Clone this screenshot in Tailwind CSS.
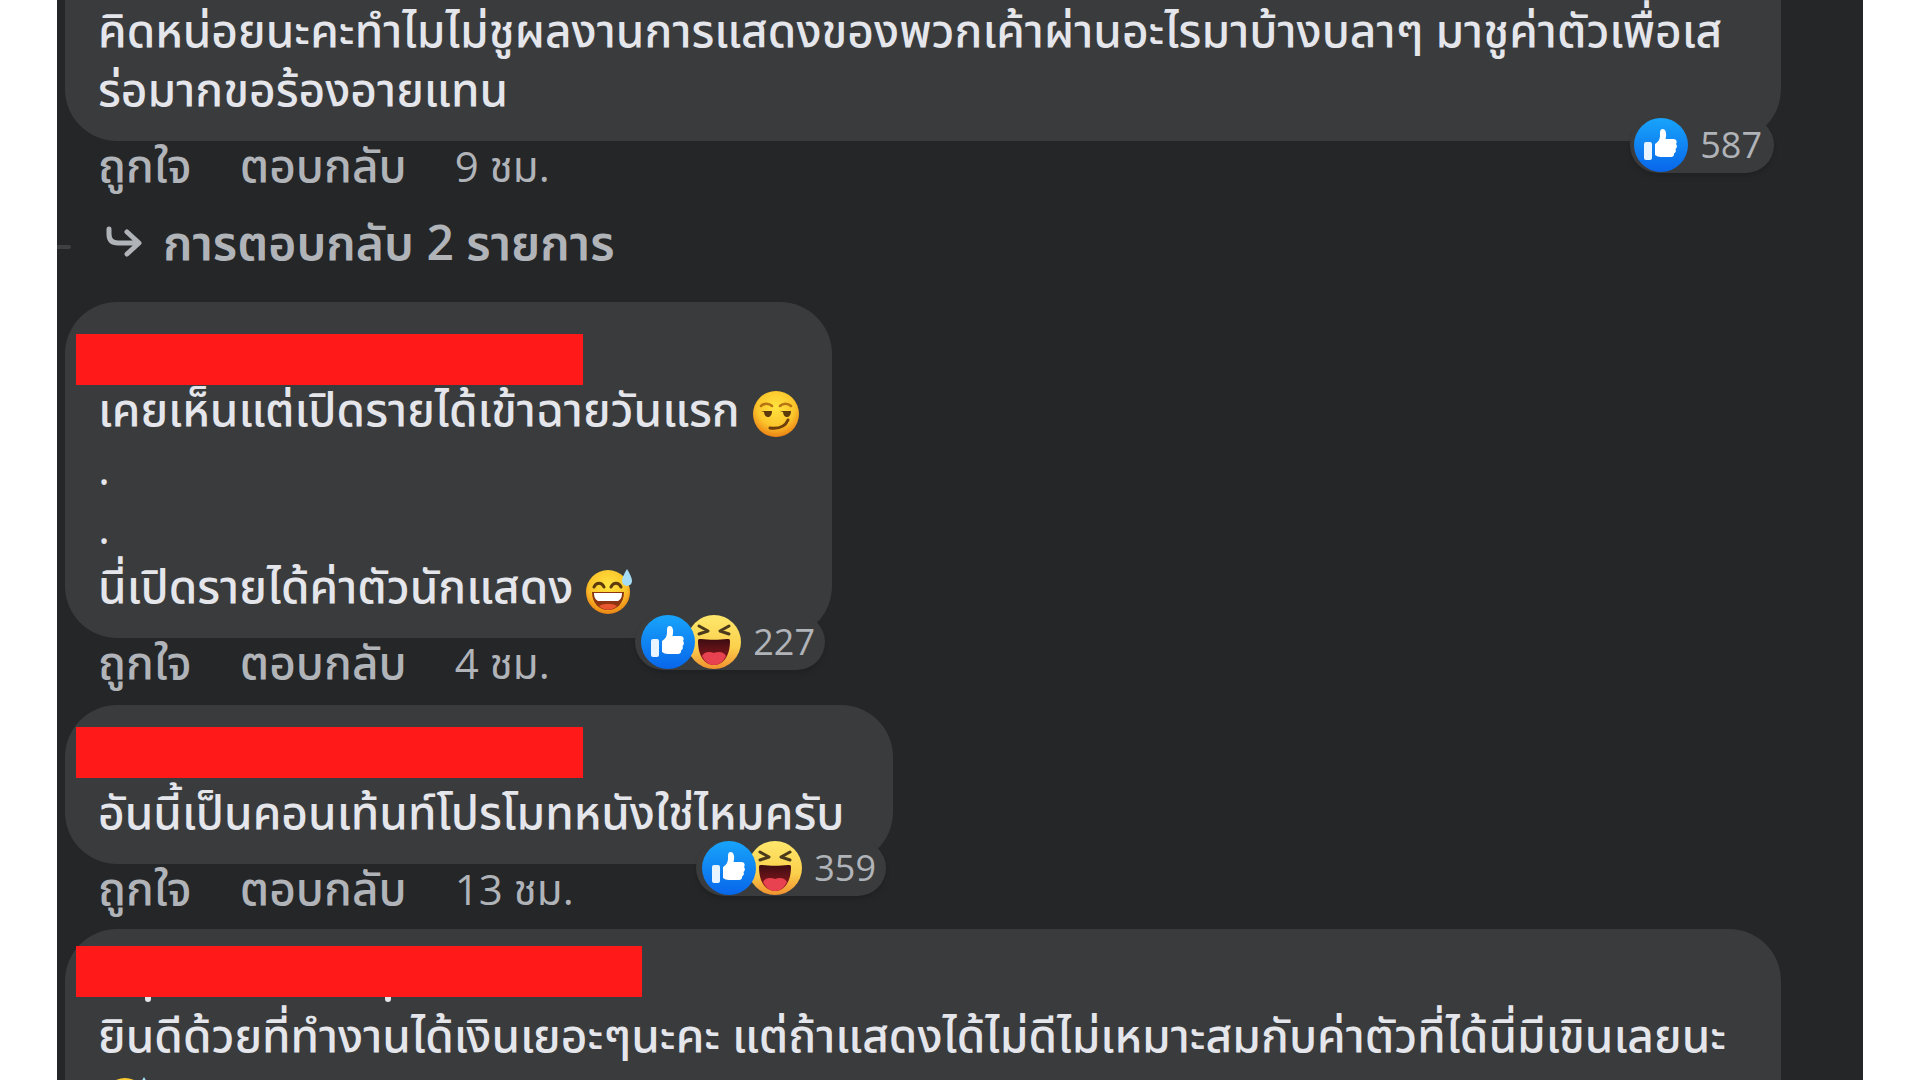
<!DOCTYPE html>
<html lang="th">
<head>
  <meta charset="UTF-8">
  <meta name="viewport" content="width=device-width, initial-scale=1.0">
  <title>ความคิดเห็น</title>
  <script src="https://cdn.jsdelivr.net/npm/@tailwindcss/browser@4"></script>
</head>
<body class="bg-white h-screen overflow-hidden font-['Open_Sans','Noto_Sans_Thai',sans-serif]">
  <!-- Shared icons -->
  <svg class="absolute size-0" aria-hidden="true">
    <defs>
      <linearGradient id="blue" x1="0" y1="0" x2="0" y2="1">
        <stop offset="0" stop-color="#18a4fb"/>
        <stop offset="1" stop-color="#0866ea"/>
      </linearGradient>
      <linearGradient id="yellow" x1="0" y1="0" x2="0" y2="1">
        <stop offset="0" stop-color="#fee76c"/>
        <stop offset="0.6" stop-color="#fbd04c"/>
        <stop offset="1" stop-color="#f0912f"/>
      </linearGradient>
      <radialGradient id="face" cx="0.5" cy="0.35" r="0.68">
        <stop offset="0" stop-color="#ffe33f"/>
        <stop offset="0.6" stop-color="#fbc52b"/>
        <stop offset="1" stop-color="#ea7a12"/>
      </radialGradient>
      <linearGradient id="mouth" x1="0" y1="0" x2="0" y2="1">
        <stop offset="0" stop-color="#3c0d10"/>
        <stop offset="1" stop-color="#9a1a22"/>
      </linearGradient>
    </defs>
    <symbol id="like" viewBox="0 0 54 54">
      <circle cx="27" cy="27" r="27" fill="url(#blue)"/>
      <rect x="10" y="24" width="8" height="18" rx="2" fill="#e8f4ff"/>
      <path d="M21 26c3-2 5-4 5-9 0-3 0-6 2.500-6 3.500 0 4.500 5 3 10h8c3 0 4 3 2.500 5 1.500 1.500 1 4-.5 5 1 2 0 4-1.500 4.500.5 2-1 3.500-3 3.500H27c-3 0-4-1-6-2z" fill="#fff"/>
    </symbol>
    <symbol id="haha" viewBox="0 0 54 54">
      <circle cx="27" cy="27" r="27" fill="url(#yellow)"/>
      <path d="M12 11l9 5-9 3M42 11l-9 5 9 3" fill="none" stroke="#4b3a1c" stroke-width="3" stroke-linecap="round" stroke-linejoin="round"/>
      <path d="M11 26c0-2 1-2 3-2 8 1 18 1 26 0 2 0 3 0 3 2 0 14-6 24-16 24S11 40 11 26z" fill="url(#mouth)"/>
      <path d="M15 41c2-4 7-5 12-3 5-2 10-1 12 3-3 6-7 9-12 9s-9-3-12-9z" fill="#e8414f"/>
    </symbol>
    <symbol id="smirk" viewBox="0 0 48 48">
      <circle cx="24" cy="24" r="23" fill="url(#face)"/>
      <path d="M9 16c3-3 8-3 11 0M28 16c3-3 8-3 11 0" fill="none" stroke="#b87412" stroke-width="2.500" stroke-linecap="round"/>
      <path d="M9 21h11c0 4-2 6-4 6s-4-2-4-5M28 21h11c0 4-2 6-4 6s-4-2-4-5" fill="#5c3a0c"/>
      <path d="M18 38c8 1 15-1 18-8" fill="none" stroke="#6d3d0c" stroke-width="3" stroke-linecap="round"/>
    </symbol>
    <symbol id="sweat" viewBox="0 0 48 48">
      <circle cx="23" cy="25" r="22" fill="url(#face)"/>
      <path d="M9 20c2-5 8-5 10 0M26 20c2-5 8-5 10 0" fill="none" stroke="#5c3a0c" stroke-width="3" stroke-linecap="round"/>
      <path d="M7 25h32c0 11-7 18-16 18S7 36 7 25z" fill="#8d3410"/>
      <path d="M9 26h28c0 5-2 7-4 8H13c-2-1-4-3-4-8z" fill="#fff"/>
      <path d="M14 39c5-3 13-3 18 0-5 5-13 5-18 0z" fill="#e8552f"/>
      <path d="M42 2c3 5 5 9 5 12a5 5 0 0 1-10 0c0-3 2-7 5-12z" fill="#a6dcf5"/>
    </symbol>
  </svg>

  <main class="mx-[57px] h-full overflow-hidden bg-[#242628] pl-2 pr-[82px] text-[#e4e6eb] text-[46px] leading-[59px] font-medium">

    <!-- Comment 1 -->
    <article>
      <div class="relative bg-[#3a3b3c] rounded-b-[52px] pb-[23px] px-[33px]">
        <p class="whitespace-nowrap">คิดหน่อยนะคะทำไมไม่ชูผลงานการแสดงของพวกเค้าผ่านอะไรมาบ้างบลาๆ มาชูค่าตัวเพื่อเส<br>ร่อมากขอร้องอายแทน</p>
        <button class="absolute right-[7px] -bottom-8 h-14 rounded-full bg-[#3a3b3c] shadow-md flex items-center pl-1 pr-3 text-4xl font-normal text-[#b0b3b8]">
          <svg class="size-[54px]"><use href="#like"/></svg>
          <span class="ml-3">587</span>
        </button>
      </div>
      <div class="flex items-baseline h-[67px] pl-[33px] gap-12 text-[46px] leading-[46px] text-[#b0b3b8]">
        <button class="font-medium">ถูกใจ</button>
        <button class="font-medium">ตอบกลับ</button>
        <a href="#" class="text-[42px] font-normal">9 ชม.</a>
      </div>
      <div class="relative h-[94px] pl-10 pt-1">
        <span class="absolute -left-2 top-[37px] w-[14px] h-1 rounded-r bg-[#3e4042]"></span>
        <button class="flex items-center gap-5 text-5xl leading-[59px] font-semibold text-[#b0b3b8]">
          <svg class="w-[38px] h-9" viewBox="0 0 38 36" fill="none" stroke="#b0b3b8" stroke-width="5" stroke-linecap="round" stroke-linejoin="round"><path d="M4 5v5q0 9 9 9h20M22 8l12 11-12 11"/></svg>
          การตอบกลับ 2 รายการ
        </button>
      </div>
    </article>

    <!-- Comment 2 -->
    <article>
      <div class="relative w-[767px] bg-[#3a3b3c] rounded-[52px] pt-[77px] pb-[23px] px-[33px]">
        <span class="absolute left-[11px] top-8 w-[507px] h-[51px] bg-[#ff1919]"></span>
        <p class="relative whitespace-nowrap">เคยเห็นแต่เปิดรายได้เข้าฉายวันแรก <svg class="inline-block size-12" role="img" aria-label="smirk"><use href="#smirk"/></svg><br>.<br>.<br>นี่เปิดรายได้ค่าตัวนักแสดง <svg class="inline-block size-12" role="img" aria-label="sweat smile"><use href="#sweat"/></svg></p>
        <button class="absolute right-[7px] -bottom-8 h-14 rounded-full bg-[#3a3b3c] shadow-md flex items-center pl-1.5 pr-2.5 text-4xl font-normal text-[#b0b3b8]">
          <svg class="relative z-10 size-[54px]"><use href="#like"/></svg>
          <svg class="size-[54px] -ml-2"><use href="#haha"/></svg>
          <span class="ml-3">227</span>
        </button>
      </div>
      <div class="flex items-baseline h-[67px] pl-[33px] gap-12 text-[46px] leading-[46px] text-[#b0b3b8]">
        <button class="font-medium">ถูกใจ</button>
        <button class="font-medium">ตอบกลับ</button>
        <a href="#" class="text-[42px] font-normal">4 ชม.</a>
      </div>
    </article>

    <!-- Comment 3 -->
    <article>
      <div class="relative w-[828px] bg-[#3a3b3c] rounded-[52px] pt-[77px] pb-[23px] px-[33px]">
        <span class="absolute left-[11px] top-[22px] w-[507px] h-[51px] bg-[#ff1919]"></span>
        <p class="relative whitespace-nowrap">อันนี้เป็นคอนเท้นท์โปรโมทหนังใช่ไหมครับ</p>
        <button class="absolute right-[7px] -bottom-8 h-14 rounded-full bg-[#3a3b3c] shadow-md flex items-center pl-1.5 pr-2.5 text-4xl font-normal text-[#b0b3b8]">
          <svg class="relative z-10 size-[54px]"><use href="#like"/></svg>
          <svg class="size-[54px] -ml-2"><use href="#haha"/></svg>
          <span class="ml-3">359</span>
        </button>
      </div>
      <div class="flex items-baseline h-[65px] pl-[33px] gap-12 text-[46px] leading-[46px] text-[#b0b3b8]">
        <button class="font-medium">ถูกใจ</button>
        <button class="font-medium">ตอบกลับ</button>
        <a href="#" class="text-[42px] font-normal">13 ชม.</a>
      </div>
    </article>

    <!-- Comment 4 -->
    <article>
      <div class="relative bg-[#3a3b3c] rounded-[52px] pt-[76px] pb-[23px] px-[33px]">
        <!-- tails of the hidden name -->
        <span class="absolute left-20 top-[65px] w-[6px] h-2 rounded-b bg-[#e4e6eb]"></span>
        <span class="absolute left-80 top-[65px] w-[6px] h-2 rounded-b bg-[#e4e6eb]"></span>
        <span class="absolute left-[11px] top-[17px] w-[566px] h-[51px] bg-[#ff1919]"></span>
        <p class="relative whitespace-nowrap">ยินดีด้วยที่ทำงานได้เงินเยอะๆนะคะ แต่ถ้าแสดงได้ไม่ดีไม่เหมาะสมกับค่าตัวที่ได้นี่มีเขินเลยนะ<br><svg class="inline-block size-12 ml-1" role="img" aria-label="sweat smile"><use href="#sweat"/></svg></p>
      </div>
    </article>
  </main>
</body>
</html>
